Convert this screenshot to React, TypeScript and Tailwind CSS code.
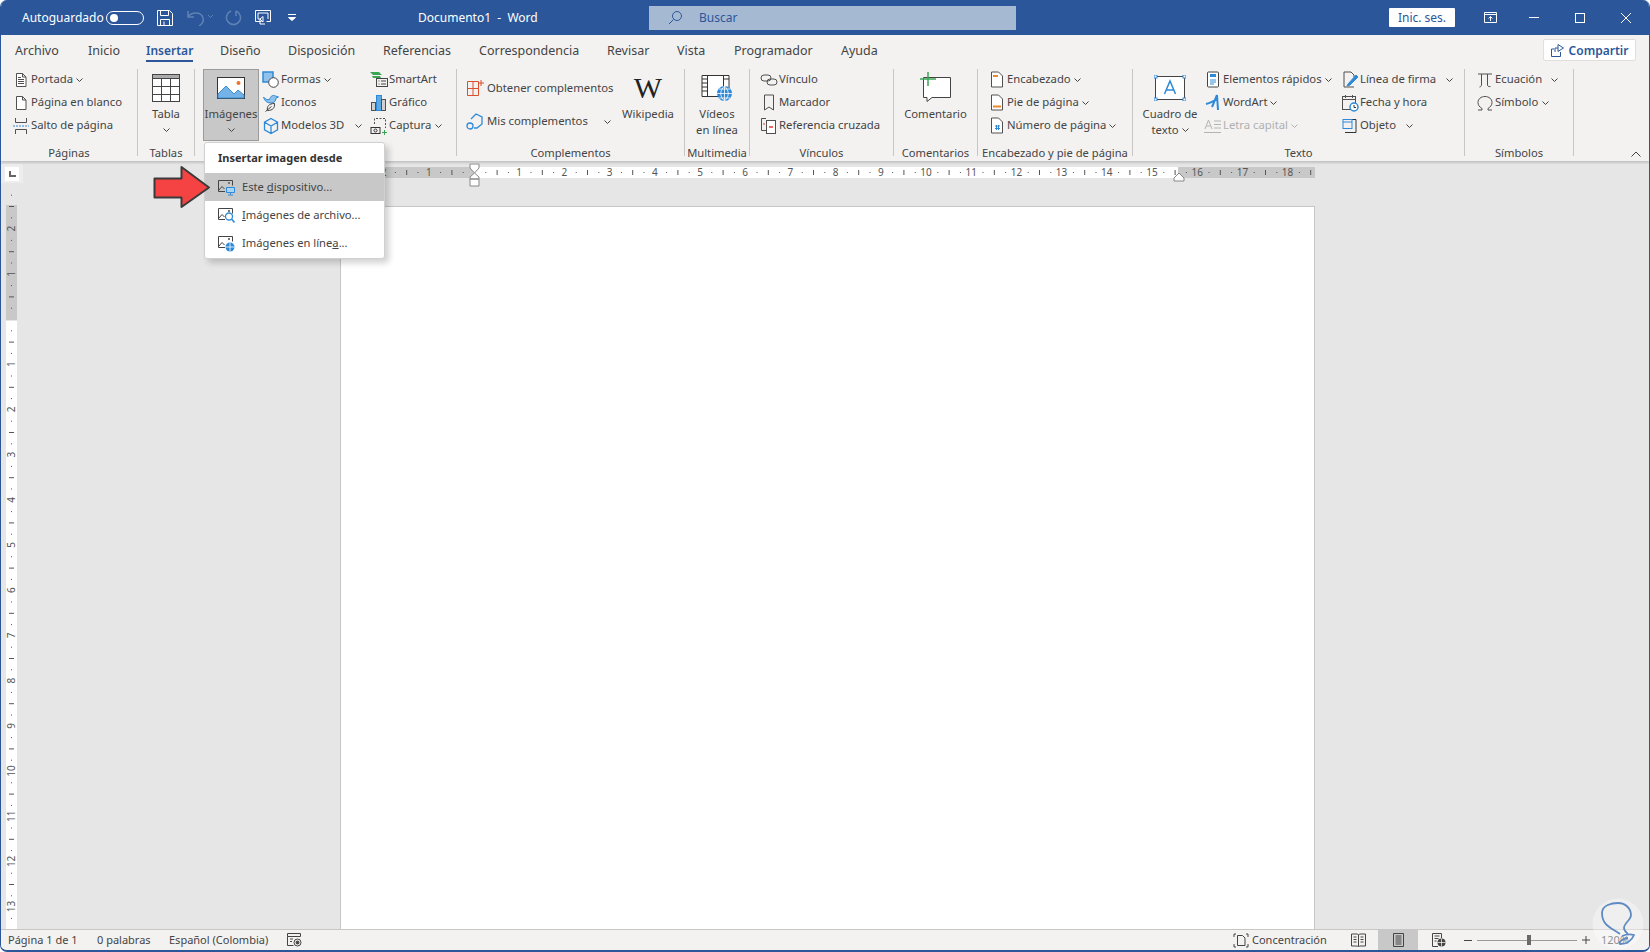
import React from "react";

const INK = "#505050";
const BLUE = "#2e8ad8";

const Chevron = ({ className = "" }: { className?: string }) => (
  <svg width="7" height="4" viewBox="0 0 7 4" fill="none" stroke="currentColor" className={`shrink-0 ${className}`}>
    <path d="M.5.5l3 3 3-3" />
  </svg>
);

const Ico = ({ w = 16, h = 16, children }: { w?: number; h?: number; children: React.ReactNode }) => (
  <svg width={w} height={h} viewBox={`0 0 ${w} ${h}`} fill="none" stroke={INK} className="shrink-0">
    {children}
  </svg>
);

const Sheet = () => <path d="M3.5 1.5h6l3.5 3.5v9.5H3.5zM9.5 1.5V5H13" fill="#fff" />;

const icons = {
  portada: (<Ico><Sheet /><path d="M5 7.5h6M5 9.5h6M5 11.5h6M5 5.5h3" /></Ico>),
  blanco: (<Ico><Sheet /></Ico>),
  salto: (<Ico><path d="M2.5 0v4.5h11V0M2.5 16v-4.5h11V16" /><path d="M0 8h16" stroke={BLUE} strokeDasharray="2 1" /></Ico>),
  formas: (<Ico w={18} h={18}><rect x="1" y="1" width="10" height="10" fill="#8fc1ea" stroke={BLUE} strokeWidth="1.5" /><circle cx="11.5" cy="11.5" r="4.8" fill="#fff" stroke="#444" /></Ico>),
  iconos: (<Ico w={18} h={18}><path d="M1.500 3c2 2.500 4 3 6 2.500C8.500 2 11 .5 13.500 2l3 1-2.500 1c0 3-2 5-5 5C5 9 2.500 7 1.500 3z" fill="#8fc1ea" stroke={BLUE} /><path d="M5.500 16.500c-1-4 1.500-7 7-7 .5 4-1.500 7-7 7zM3.500 17.500l6-5" stroke="#444" /></Ico>),
  cubo: (<Ico w={18} h={18}><path d="M9 1.5l6.5 3.7v7.6L9 16.5l-6.5-3.7V5.2zM2.5 5.2L9 9l6.500-3.800M9 9v7.500" stroke={BLUE} strokeWidth="1.300" /></Ico>),
  smartart: (<Ico w={18} h={18}><path d="M0 1h9l3 3H3zM0 7h3l-1-2h8l1 2" fill="#3aa655" stroke="none" /><rect x="6.500" y="7.500" width="11" height="8" fill="#f3f2f1" stroke="#444" /><path d="M8.500 10h1M11 10h5M8.500 13h1M11 13h5" stroke="#444" /></Ico>),
  grafico: (<Ico w={18} h={18}><rect x="1.500" y="8.500" width="4" height="8" fill="#d0d0d0" /><rect x="6.500" y="1.500" width="5" height="15" fill="#5ea9e0" stroke={BLUE} /><rect x="11.500" y="5.500" width="4" height="11" fill="#d0d0d0" /></Ico>),
  captura: (<Ico w={18} h={18}><path d="M4.500 7V1.500h11V11" strokeDasharray="2 1.500" /><rect x="1" y="10.500" width="9" height="6" fill="#f3f2f1" stroke="#333" /><circle cx="5.500" cy="13.500" r="1.500" stroke="#333" /><path d="M14.500 13v5M12 15.500h5" stroke="#3aa655" /></Ico>),
  vinculo: (<Ico w={18} h={14}><rect x="1" y="2" width="10" height="6" rx="3" /><rect x="7" y="6" width="10" height="6" rx="3" /></Ico>),
  marcador: (<Ico w={12} h={17}><path d="M1.500 1h9v15l-4.500-3-4.500 3z" /></Ico>),
  referencia: (<Ico w={18} h={17}><path d="M6 1.500H1.500v12H6" /><rect x="6.500" y="3.500" width="9" height="13" fill="#fff" /><path d="M3 7h2" stroke="#e03a2a" /><path d="M9 10h4" stroke="#e03a2a" strokeWidth="1.500" /></Ico>),
  encabezado: (<Ico w={14} h={17}><path d="M1.500 1h7l4 4v11h-11z" fill="#fff" /><path d="M3 5h5" stroke="#e8892b" strokeWidth="2" /></Ico>),
  pie: (<Ico w={14} h={17}><path d="M1.500 1h7l4 4v11h-11z" fill="#fff" /><path d="M3 12.500h8" stroke="#e8892b" strokeWidth="2" /></Ico>),
  numero: (<Ico w={14} h={17}><path d="M1.500 1h7l4 4v11h-11z" fill="#fff" /><path d="M5 9h5M5 11.500h5M6.500 8v5M8.500 8v5" stroke={BLUE} /></Ico>),
  elementos: (<Ico w={16} h={17}><rect x="2.500" y="1" width="11" height="15" rx="1" fill="#fff" stroke="#444" /><path d="M5 4.500h6" stroke={BLUE} strokeWidth="3" /><path d="M5 9h6M5 11h6M5 13h4" stroke={BLUE} /></Ico>),
  wordart: (<Ico w={16} h={17}><path d="M1 10c4-1 7-3 12-5M12 1L7 13M12 1l1 15" stroke={BLUE} strokeWidth="2" /></Ico>),
  letra: (<Ico w={18} h={16}><path d="M1 11l3.500-9 3.500 9M2.500 8h4M10 3h7M10 6.500h7M10 10h7M0 14.500h17" stroke="#b4b4b4" /></Ico>),
  firma: (<Ico w={16} h={17}><path d="M2 1h7l3 3v2M2 1v15h10" /><path d="M6 13l8-9 2 2-8 8-3 1z" fill={BLUE} stroke={BLUE} /></Ico>),
  fecha: (<Ico w={18} h={18}><rect x="1.500" y="2.500" width="13" height="13" /><path d="M1.500 5.500h13M4.500 1v3M11.500 1v3" /><circle cx="13" cy="13" r="4" fill="#fff" stroke={BLUE} strokeWidth="1.500" /><path d="M13 11v2.500h2" stroke="#333" /></Ico>),
  objeto: (<Ico w={16} h={16}><path d="M5 1.500h9v13H5M5 14.500H3" stroke="#333" /><rect x="1" y="1.500" width="9" height="9" fill="#f3f2f1" stroke={BLUE} /><path d="M1 4h9" stroke={BLUE} /></Ico>),
};

const Row = ({ icon, label, chev, off }: { icon: React.ReactNode; label: string; chev?: string; off?: boolean }) => (
  <div className={`flex h-[23px] items-center whitespace-nowrap ${off ? "text-[#b0b0b0]" : ""}`}>
    <span className="flex w-[18px] shrink-0 justify-center">{icon}</span>
    <span className="ml-[1px]">{label}</span>
    {chev && <Chevron className={chev} />}
  </div>
);

const Big = ({ icon, lines, chev, w, inline }: { icon: React.ReactNode; lines: string[]; chev?: boolean; w: string; inline?: boolean }) => (
  <div className={`flex flex-col items-center ${w}`}>
    <div className="flex h-[37px] items-center justify-center">{icon}</div>
    {lines.map((l, i) => (
      <div key={l} className="flex h-[16px] items-center whitespace-nowrap leading-[16px]">
        {l}
        {inline && i === lines.length - 1 && <Chevron className="ml-[3px]" />}
      </div>
    ))}
    {chev && <div className="flex h-[16px] items-center"><Chevron /></div>}
  </div>
);

const Group = ({ w, label, children, className = "" }: { w: string; label: string; children?: React.ReactNode; className?: string }) => (
  <section className={`flex h-[87px] shrink-0 flex-col border-r border-[#c8c6c4] ${w}`}>
    <div className={`flex min-h-0 flex-1 ${className}`}>{children}</div>
    <div className="-mb-[4px] h-[14px] whitespace-nowrap text-center text-[11.2px] leading-[14px]">{label}</div>
  </section>
);

const tabs: [string, string][] = [
  ["Archivo", "w-[73px]"],
  ["Inicio", "w-[58px]"],
  ["Insertar", "w-[74px]"],
  ["Diseño", "w-[68px]"],
  ["Disposición", "w-[95px]"],
  ["Referencias", "w-[96px]"],
  ["Correspondencia", "w-[128px]"],
  ["Revisar", "w-[70px]"],
  ["Vista", "w-[57px]"],
  ["Programador", "w-[107px]"],
  ["Ayuda", "w-[50px]"],
];

const TitleBar = () => (
  <header className="flex h-[35px] shrink-0 items-center bg-[#2b579a] text-[12px] text-white">
    <span className="ml-[21px] w-[84px] whitespace-nowrap">Autoguardado</span>
    <div className="flex h-[14px] w-[38px] items-center rounded-full border border-white pl-[3px]">
      <div className="h-[8px] w-[8px] rounded-full bg-white" />
    </div>
    <svg width="16" height="16" viewBox="0 0 16 16" fill="none" stroke="#fff" className="ml-[13px]">
      <path d="M.5.5h12l3 3v12H.5zM3.500.5v5h8v-5M3.500 15.500V9.500h9v6M7 11.500v4" />
    </svg>
    <svg width="27" height="16" viewBox="0 0 27 16" fill="none" stroke="#5f82b5" strokeWidth="1.500" className="ml-[13px]">
      <path d="M2 1v6h6M2 7c3-5 13-6 15 1 1 3-1 6-4 8" />
      <path d="M22 5l2.500 2.500L27 5" strokeWidth="1" />
    </svg>
    <svg width="17" height="17" viewBox="0 0 17 17" fill="none" stroke="#5f82b5" strokeWidth="1.500" className="ml-[12px]">
      <path d="M11 2a7 7 0 1 1-5 0M11 2v5" />
    </svg>
    <svg width="16" height="15" viewBox="0 0 16 15" fill="none" stroke="#fff" className="ml-[13px]">
      <path d="M.5.5h15v11h-4M.5.5v11h6M3 3h10v6M3 3v6h3M5 9l3-2.500V12zM5 9v5h5" />
    </svg>
    <svg width="8" height="7" viewBox="0 0 8 7" fill="none" stroke="#fff" className="ml-[17px]">
      <path d="M0 .5h8M.5 3.500h7L4 6.500z" fill="#fff" />
    </svg>
    <span className="ml-[122px] w-[114px] whitespace-pre">Documento1  -  Word</span>
    <div className="ml-[117px] flex h-[24px] w-[367px] items-center bg-[#a6b9d3] text-[#2b579a]">
      <svg width="15" height="15" viewBox="0 0 15 15" fill="none" stroke="#2b579a" className="ml-[19px]">
        <circle cx="9" cy="6" r="4.500" />
        <path d="M5.500 9.500L1 14" />
      </svg>
      <span className="ml-[16px]">Buscar</span>
    </div>
    <div className="ml-[373px] flex h-[19px] w-[66px] items-center justify-center rounded-[1px] bg-white text-[#2b579a]">Inic. ses.</div>
    <svg width="19" height="12" viewBox="0 0 19 12" fill="none" stroke="#fff" className="ml-[26px]">
      <path d="M3.500.5h12v10h-12zM3.500 2.500h12M9.500 9V4.500M7.500 6.500l2-2 2 2" />
    </svg>
    <div className="ml-[29px] h-[1px] w-[10px] bg-white" />
    <div className="ml-[36px] h-[10px] w-[10px] border border-white" />
    <svg width="10" height="10" viewBox="0 0 10 10" stroke="#fff" className="ml-[36px]">
      <path d="M0 0l10 10M10 0L0 10" />
    </svg>
  </header>
);

const TabBar = () => (
  <nav className="flex h-[29px] shrink-0 bg-[#f3f2f1] pl-[14px] text-[12.5px]">
    {tabs.map(([t, w]) => (
      <div key={t} className={`shrink-0 pt-[7px] ${w}`}>
        <span className={`inline-block whitespace-nowrap border-b-2 leading-[18px] ${t === "Insertar" ? "border-[#2b579a] text-[12px] font-semibold text-[#2b579a]" : "border-transparent"}`}>{t}</span>
      </div>
    ))}
    <div className="ml-auto mr-[13px] mt-[4px] flex h-[22px] w-[93px] items-center justify-center gap-[5px] rounded-[2px] border border-[#e1dfdd] bg-white pt-[1px] text-[12px] font-semibold text-[#2b579a]">
      <svg width="13" height="13" viewBox="0 0 13 13" fill="none" stroke="#2b579a">
        <path d="M7 .5L12.500 4 7 7.500zM7 4H4v4M9.500 8v4.500H.5V5H3" />
      </svg>
      Compartir
    </div>
  </nav>
);

const Ribbon = () => (
  <div className="relative z-10 flex h-[97px] shrink-0 bg-[#f3f2f1] pt-[5px] text-[11.3px] shadow-[0_2px_2px_#c4c4c4]">
    <Group w="w-[137px]" label="Páginas" className="-mt-[1px] flex-col pl-[11px]">
      <Row icon={icons.portada} label="Portada" chev="ml-[3px]" />
      <Row icon={icons.blanco} label="Página en blanco" />
      <Row icon={icons.salto} label="Salto de página" />
    </Group>
    <Group w="w-[57px]" label="Tablas">
      <Big w="w-full" lines={["Tabla"]} chev icon={
        <svg width="28" height="28" viewBox="0 0 28 28" fill="none" stroke="#444">
          <rect x=".5" y=".5" width="27" height="27" fill="#fff" />
          <rect x=".5" y=".5" width="27" height="4" fill="#aaa" />
          <path d="M9.500 4v24M18.500 4v24M0 12.500h28M0 20.500h28" />
        </svg>
      } />
    </Group>
    <Group w="w-[262px]" label="" className="pl-[8px]">
      <div className="h-[72px] w-[56px] shrink-0 border border-[#9b9b9b] bg-[#c8c8c8]">
        <div className="-mt-[1px]">
          <Big w="w-full" lines={["Imágenes"]} chev icon={
            <svg width="28" height="22" viewBox="0 0 28 22" fill="none">
              <rect x=".5" y=".5" width="27" height="21" fill="#fff" stroke="#333" />
              <path d="M1 17l8-8 8 8 4-4 6 5v3H1z" fill="#73b3e7" stroke="#3f8ccb" />
              <circle cx="21.500" cy="6" r="2" fill="#e8762b" />
            </svg>
          } />
        </div>
      </div>
      <div className="-mt-[1px] ml-[3px] flex w-[108px] shrink-0 flex-col">
        <Row icon={icons.formas} label="Formas" chev="ml-[3px]" />
        <Row icon={icons.iconos} label="Iconos" />
        <Row icon={icons.cubo} label="Modelos 3D" chev="ml-[11px]" />
      </div>
      <div className="-mt-[1px] flex flex-col">
        <Row icon={icons.smartart} label="SmartArt" />
        <Row icon={icons.grafico} label="Gráfico" />
        <Row icon={icons.captura} label="Captura" chev="ml-[4px]" />
      </div>
    </Group>
    <Group w="w-[228px]" label="Complementos" className="pl-[9px]">
      <div className="flex w-[155px] flex-col pt-[8px]">
        <div className="flex h-[23px] items-center gap-[3px] whitespace-nowrap">
          <Ico w={18} h={17}>
            <path d="M1.500 1.500h11v14h-11zM7 1.500v14M1.500 8.500h11" stroke="#d9512c" />
            <path d="M15 0v6M12 3h6" stroke="#d9512c" />
          </Ico>
          Obtener complementos
        </div>
        <div className="mt-[10px] flex h-[23px] items-center gap-[3px] whitespace-nowrap">
          <Ico w={18} h={17}>
            <path d="M5 6l5-5 6 3v7l-5 4H8" stroke={BLUE} strokeWidth="1.300" />
            <circle cx="4" cy="13" r="3" stroke={BLUE} strokeWidth="1.300" />
          </Ico>
          Mis complementos
          <Chevron className="ml-[13px]" />
        </div>
      </div>
      <Big w="w-[54px]" lines={["Wikipedia"]} icon={
        <span className="font-['Liberation_Serif',serif] text-[30px] leading-none text-[#222]">W</span>
      } />
    </Group>
    <Group w="w-[65px]" label="Multimedia">
      <Big w="w-full" lines={["Vídeos", "en línea"]} icon={
        <svg width="32" height="28" viewBox="0 0 32 28" fill="none" stroke="#333">
          <path d="M1 1.500h27v21H1z" fill="#fff" />
          <path d="M6.500 1.500v21M22.500 1.500v21M1 5h5M1 9h5M1 13h5M1 17h5M23 5h5" />
          <circle cx="23.500" cy="19.500" r="7.500" fill="#2e8ad8" stroke="none" />
          <path d="M16 19.500h15M23.500 12v15M18 15h11M18 24h11M23.500 12c-5 5-5 10 0 15M23.500 12c5 5 5 10 0 15" stroke="#fff" strokeWidth=".8" />
        </svg>
      } />
    </Group>
    <Group w="w-[144px]" label="Vínculos" className="-mt-[1px] flex-col pl-[10px]">
      <Row icon={icons.vinculo} label="Vínculo" />
      <Row icon={icons.marcador} label="Marcador" />
      <Row icon={icons.referencia} label="Referencia cruzada" />
    </Group>
    <Group w="w-[84px]" label="Comentarios">
      <Big w="w-full" lines={["Comentario"]} icon={
        <svg width="32" height="30" viewBox="0 0 32 30" fill="none" stroke="#444" className="-mt-[2px]">
          <path d="M3.500 5.500h27v20H12l-5 4v-4H3.500z" fill="#fff" />
          <path d="M8 0v14M0 7h16" stroke="#3aa655" strokeWidth="1.500" />
        </svg>
      } />
    </Group>
    <Group w="w-[155px]" label="Encabezado y pie de página" className="-mt-[1px] flex-col pl-[10px]">
      <Row icon={icons.encabezado} label="Encabezado" chev="ml-[3px]" />
      <Row icon={icons.pie} label="Pie de página" chev="ml-[3px]" />
      <Row icon={icons.numero} label="Número de página" chev="ml-[3px]" />
    </Group>
    <Group w="w-[332px]" label="Texto" className="pl-[8px]">
      <Big w="w-[58px]" lines={["Cuadro de", "texto"]} inline icon={
        <svg width="32" height="26" viewBox="0 0 32 26" fill="none">
          <rect x="1.500" y="1.500" width="29" height="23" fill="#fff" stroke="#444" />
          <rect x="0" y="0" width="3" height="3" fill="#fff" stroke={BLUE} />
          <rect x="29" y="0" width="3" height="3" fill="#fff" stroke={BLUE} />
          <rect x="0" y="23" width="3" height="3" fill="#fff" stroke={BLUE} />
          <rect x="29" y="23" width="3" height="3" fill="#fff" stroke={BLUE} />
          <path d="M10.500 19L16 6l5.500 13M12.500 15h7" stroke={BLUE} strokeWidth="1.500" />
        </svg>
      } />
      <div className="-mt-[1px] ml-[5px] flex w-[137px] shrink-0 flex-col">
        <Row icon={icons.elementos} label="Elementos rápidos" chev="ml-[3px]" />
        <Row icon={icons.wordart} label="WordArt" chev="ml-[3px]" />
        <Row icon={icons.letra} label="Letra capital" chev="ml-[3px]" off />
      </div>
      <div className="-mt-[1px] flex flex-col">
        <Row icon={icons.firma} label="Línea de firma" chev="ml-[10px]" />
        <Row icon={icons.fecha} label="Fecha y hora" />
        <Row icon={icons.objeto} label="Objeto" chev="ml-[10px]" />
      </div>
    </Group>
    <Group w="w-[109px]" label="Símbolos" className="-mt-[1px] flex-col pl-[11px]">
      <Row label="Ecuación" chev="ml-[9px]" icon={
        <Ico w={16} h={16}><path d="M1 2h14M4.500 2v11c0 1-1 2-2 2M10.500 2v11c0 1 1 2 3 1.500" /></Ico>
      } />
      <Row label="Símbolo" chev="ml-[4px]" icon={
        <Ico w={16} h={16}><path d="M1 15h4v-1.500C2.500 12 1 10 1 7.500 1 4 4 1.500 8 1.500s7 2.500 7 6c0 2.500-1.500 4.500-4 6V15h4" /></Ico>
      } />
    </Group>
    <svg width="10" height="6" viewBox="0 0 10 6" fill="none" stroke="#444" className="ml-[57px] mt-[82px]">
      <path d="M.5 5.500L5 1l4.500 4.500" />
    </svg>
  </div>
);

const PX = 45.2;

const HRuler = () => {
  const x0 = 133;
  const nums = [-2, -1, 0, 1, 2, 3, 4, 5, 6, 7, 8, 9, 10, 11, 12, 13, 14, 15, 16, 17, 18];
  return (
    <svg width="974" height="11" viewBox="0 0 974 11" className="shrink-0 overflow-visible">
      <rect width="133" height="11" fill="#c8c8c8" />
      <rect x="133" width="704" height="11" fill="#fff" />
      <rect x="837" width="137" height="11" fill="#c8c8c8" />
      {nums.map((n) => {
        const x = x0 + n * PX;
        return (
          <g key={n} fill="#555">
            {n !== 0 && <text x={x} y="9" fontSize="10" textAnchor="middle">{Math.abs(n)}</text>}
            <rect x={x + PX * 0.25} y="5" width="1" height="1" />
            <rect x={x + PX * 0.5} y="3" width="1" height="5" />
            {n < 18 && <rect x={x + PX * 0.75} y="5" width="1" height="1" />}
          </g>
        );
      })}
      {/* sangrias: reloj de arena sobre el margen izquierdo */}
      <path d="M129 -3h9v4l-4.500 5-4.500-5zM133.500 6l4.500 4v2h-9v-2zM129 12h9v7h-9z" fill="#fff" stroke="#888" />
      <path d="M833 11l5-5 5 5v3h-10z" fill="#fff" stroke="#888" />
    </svg>
  );
};

const VRuler = () => {
  const y0 = 114;
  const nums = [-2, -1, 1, 2, 3, 4, 5, 6, 7, 8, 9, 10, 11, 12, 13];
  return (
    <svg width="11" height="724" viewBox="0 0 11 724" className="ml-[5px] mt-[22px] shrink-0 overflow-visible">
      <rect width="11" height="115" fill="#c8c8c8" />
      <rect y="116" width="11" height="608" fill="#fff" />
      {nums.map((n) => {
        const y = y0 + n * PX;
        return (
          <g key={n} fill="#555">
            <text transform={`translate(9 ${y}) rotate(-90)`} fontSize="10" textAnchor="middle">{Math.abs(n)}</text>
            <rect x="5" y={y + PX * 0.25} width="1" height="1" />
            <rect x="3" y={y + PX * 0.5} width="5" height="1" />
            <rect x="5" y={y + PX * 0.75} width="1" height="1" />
          </g>
        );
      })}
      {[-3, 0].map((n) => {
        const y = y0 + n * PX;
        return (
          <g key={n} fill="#555">
            <rect x="5" y={y + PX * 0.25} width="1" height="1" />
            <rect x="3" y={y + PX * 0.5} width="5" height="1" />
            <rect x="5" y={y + PX * 0.75} width="1" height="1" />
          </g>
        );
      })}
    </svg>
  );
};

const menuItems: [string, string, string, React.ReactNode][] = [
  ["Este ", "d", "ispositivo...", <path key="a" d="M9.500 8.500h8v5h-8zM13.500 13.500v2M11 16h5" stroke={BLUE} fill="#a9d4f3" />],
  ["", "I", "mágenes de archivo...", <g key="b"><circle cx="12" cy="9.500" r="3.500" stroke={BLUE} fill="#fff" strokeWidth="1.300" /><path d="M14.500 12l3 3.500" stroke={BLUE} strokeWidth="1.600" /></g>],
  ["Imágenes en líne", "a", "...", <g key="c"><circle cx="13" cy="12" r="4.500" fill={BLUE} stroke="none" /><path d="M8.500 12h9M13 7.500v9" stroke="#fff" strokeWidth=".8" /></g>],
];

const Dropdown = () => (
  <div className="absolute left-[203px] top-[142px] z-20 w-[181px] rounded-[3px] border border-[#d0d0d0] bg-white pb-[1px] text-[11.2px] shadow-[4px_4px_6px_rgba(0,0,0,0.18)]">
    <div className="flex h-[30px] items-center pl-[13px] text-[11px] font-bold text-[#333]">Insertar imagen desde</div>
    {menuItems.map(([a, u, b, mark], i) => (
      <div key={b} className={`flex h-[28px] items-center whitespace-nowrap pl-[12px] ${i === 0 ? "bg-[#c8c8c8]" : ""}`}>
        <svg width="18" height="17" viewBox="0 0 18 17" fill="none" stroke="#444" className="shrink-0">
          <path d="M1.500 1.500h14v5M1.500 1.500v11H8" />
          <path d="M2 11l3-3.500L7.500 10" />
          <rect x="11" y="3" width="2" height="2" fill="#777" stroke="none" />
          {mark}
        </svg>
        <span className="ml-[7px]">{a}<span className="underline">{u}</span>{b}</span>
      </div>
    ))}
  </div>
);

const StatusBar = () => (
  <footer className="flex h-[21px] shrink-0 items-center border-t border-[#c8c6c4] bg-[#f3f2f1] text-[11px]">
    <span className="ml-[7px] w-[89px] whitespace-nowrap">Página 1 de 1</span>
    <span className="w-[72px] whitespace-nowrap">0 palabras</span>
    <span className="w-[118px] whitespace-nowrap">Español (Colombia)</span>
    <svg width="15" height="14" viewBox="0 0 15 14" fill="none" stroke="#444">
      <path d="M.5.500h13v3H.5zM.5 3.500v9h6M3 6h3M3 8.500h2" />
      <circle cx="10.500" cy="9.500" r="3.500" />
      <circle cx="10.500" cy="9.500" r="1.500" fill="#444" />
    </svg>
    <svg width="16" height="15" viewBox="0 0 16 15" fill="none" stroke="#444" className="ml-[931px]">
      <path d="M1 4V1h2M13 1h2v3M1 11v3h2M13 14h2v-3M4.500 2.500h5l2.500 2.500v7.500H4.500z" />
    </svg>
    <span className="ml-[3px] w-[99px] whitespace-nowrap">Concentración</span>
    <svg width="15" height="14" viewBox="0 0 15 14" fill="none" stroke="#444">
      <path d="M.5 1h6l1 1 1-1h6v12h-6l-1 1-1-1h-6zM7.500 2v11M2.500 4h3M2.500 6.500h3M2.500 9h3M9.500 4h3M9.500 6.500h3M9.500 9h3" />
    </svg>
    <div className="ml-[12px] flex h-full w-[40px] items-center justify-center bg-[#c8c8c8]">
      <svg width="11" height="14" viewBox="0 0 11 14" fill="none" stroke="#444">
        <path d="M.5.500h10v13H.5zM2.500 3h6M2.500 5h6M2.500 7h6M2.500 9h6M2.500 11h6" />
      </svg>
    </div>
    <svg width="15" height="14" viewBox="0 0 15 14" fill="none" stroke="#444" className="ml-[13px]">
      <path d="M7 13.500H1.500V.5h9v5M3.500 3h5M3.500 5.500h4M3.500 8h2" />
      <circle cx="10.500" cy="9.500" r="4" fill="#444" stroke="none" />
      <path d="M6.500 9.500h8M10.500 5.500v8" stroke="#fff" strokeWidth=".7" />
    </svg>
    <div className="ml-[18px] h-[1px] w-[8px] bg-[#444]" />
    <div className="ml-[5px] flex h-[1px] w-[100px] items-center justify-center bg-[#9a9a9a]">
      <div className="ml-[3px] h-[10px] w-[4px] bg-[#6a6a6a]" />
    </div>
    <svg width="8" height="8" viewBox="0 0 8 8" stroke="#444" className="ml-[5px]">
      <path d="M0 4h8M4 0v8" />
    </svg>
    <span className="ml-[11px] text-[#555]">120%</span>
  </footer>
);

export default function App() {
  return (
    <div className="relative flex h-[952px] w-[1650px] flex-col overflow-hidden rounded-[7px] border-x border-b-2 border-[#2b579a] bg-[#e6e6e6] font-['Noto_Sans',sans-serif] text-[#444]">
      <TitleBar />
      <TabBar />
      <Ribbon />
      <main className="flex min-h-0 flex-1 bg-[#e6e6e6]">
        <div className="flex w-[24px] shrink-0 flex-col pt-[3px]">
          <div className="flex h-[19px] w-[22px] shrink-0 items-center justify-center bg-[#ededed]">
            <div className="flex h-[14px] w-[14px] items-center justify-center bg-white">
              <svg width="7" height="6" viewBox="0 0 7 6" fill="#666"><path d="M0 0h2v4h5v2H0z" /></svg>
            </div>
          </div>
          <VRuler />
        </div>
        <div className="flex min-w-0 flex-1 flex-col pl-[315px]">
          <div className="ml-[1px] mt-[6px]"><HRuler /></div>
          <div className="mt-[28px] w-[975px] flex-1 border-x border-t border-[#c8c6c4] bg-white" />
        </div>
      </main>
      <StatusBar />
      <Dropdown />
      <svg width="58" height="44" viewBox="0 0 58 44" className="absolute left-[152px] top-[165px] z-30">
        <path d="M1.500 13.500h27V2L56 22.500 28.500 42V32.500h-27z" fill="#f54343" stroke="#3a3a3a" strokeWidth="2" strokeLinejoin="round" />
      </svg>
      <svg width="52" height="52" viewBox="0 0 52 52" fill="none" className="absolute left-[1591px] top-[898px] z-30">
        <circle cx="26" cy="26" r="25.500" fill="#fff" fillOpacity=".35" />
        <path d="M28 36C20 30 10 28 10 15 10 7 20 5 26 5c8 0 13 6 13 12 0 5-7 8-7 13 0 3 3 5 4 6" stroke="#5f8ac2" strokeWidth="1.800" />
        <path d="M30 38c5-2 8-2 12-1-2 5-7 9-14 9-2-2 4-6 8-6" stroke="#5f8ac2" strokeWidth="1.800" />
      </svg>
    </div>
  );
}
